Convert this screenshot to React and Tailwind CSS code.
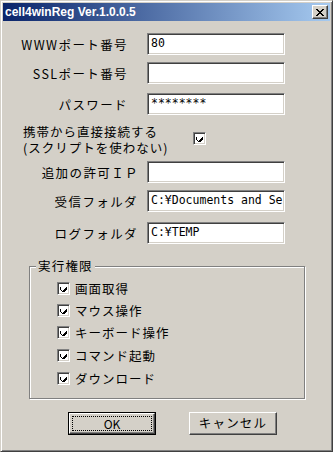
import React from "react";

const jp = { fontFamily: '"Noto Sans CJK JP", "Noto Sans", sans-serif' };
const mono = { fontFamily: '"DejaVu Sans Mono", "Liberation Mono", monospace' };

function Check({ checked = true }) {
  return (
    <span className="flex w-[13px] h-[13px] shrink-0 items-center justify-center bg-white border border-t-[#808080] border-l-[#808080] border-b-white border-r-white shadow-[inset_1px_1px_0_#404040,inset_-1px_-1px_0_#d4d0c8]">
      {checked ? (
        <svg width="7" height="7" viewBox="0 0 7 7" shapeRendering="crispEdges">
          <path d="M0 2h1v3h1v1h1v-1h1v-1h1v-1h1v-1h1v3h-1v1h-1v1h-1v1h-1v-1h-1v-1h-1v-1h-1z" fill="#000" />
        </svg>
      ) : null}
    </span>
  );
}

function Field({ label, value, pr, mt }) {
  return (
    <div className={`flex items-center ${mt}`}>
      <div className={`w-[144px] text-right text-[12.5px] leading-[15px] tracking-[1.4px] text-black ${pr}`} style={jp}>
        {label}
      </div>
      <div
        className="w-[138px] h-[22px] flex items-center pl-[3px] bg-white border border-t-[#808080] border-l-[#808080] border-b-white border-r-white shadow-[inset_1px_1px_0_#404040,inset_-1px_-1px_0_#d4d0c8] overflow-hidden whitespace-nowrap text-[11.5px] text-black"
        style={mono}
      >
        {value}
      </div>
    </div>
  );
}

const perms = [
  { label: "画面取得", mt: "mt-0" },
  { label: "マウス操作", mt: "mt-[9px]" },
  { label: "キーボード操作", mt: "mt-[9px]" },
  { label: "コマンド起動", mt: "mt-[10px]" },
  { label: "ダウンロード", mt: "mt-[10px]" },
];

export default function App() {
  return (
    <div className="w-[333px] h-[452px] bg-[#d4d0c8] border border-t-[#d4d0c8] border-l-[#d4d0c8] border-r-[#404040] border-b-[#404040] shadow-[inset_1px_1px_0_#fff,inset_-1px_-1px_0_#808080] p-[2px] select-none">
      <div className="h-[18px] flex items-center justify-between pl-[2px] pr-[2px] bg-[linear-gradient(90deg,#0a246a,#a6caf0)]">
        <span className="text-white font-bold text-[12px] leading-none" style={{ fontFamily: '"Liberation Sans", Arial, sans-serif' }}>
          cell4winReg Ver.1.0.0.5
        </span>
        <span className="w-[16px] h-[14px] flex items-center justify-center bg-[#d4d0c8] border border-t-white border-l-white border-r-[#404040] border-b-[#404040] shadow-[inset_-1px_-1px_0_#808080]">
          <svg width="8" height="7" viewBox="0 0 8 7" shapeRendering="crispEdges">
            <path d="M0 0h2v1h1v1h2v-1h1v-1h2v1h-1v1h-1v1h-1v1h1v1h1v1h1v1h-2v-1h-1v-1h-2v1h-1v1h-2v-1h1v-1h1v-1h1v-1h-1v-1h-1z" fill="#000" />
          </svg>
        </span>
      </div>

      <Field label="WWWポート番号" value="80" pr="pr-[19px]" mt="mt-[12px]" />
      <Field label="SSLポート番号" value="" pr="pr-[19px]" mt="mt-[7px]" />
      <Field label="パスワード" value="********" pr="pr-[19px]" mt="mt-[9px]" />

      <div className="flex items-start mt-[9px] pl-[20px]">
        <p className="w-[170px] text-[12.5px] leading-[16px] tracking-[1px] text-black" style={jp}>
          携帯から直接接続する
          <br />
          (スクリプトを使わない)
        </p>
        <div className="flex mt-[8px]">
          <Check />
        </div>
      </div>

      <Field label="追加の許可ＩＰ" value="" pr="pr-[8px]" mt="mt-[5px]" />
      <Field label="受信フォルダ" value="C:¥Documents and Se" pr="pr-[9px]" mt="mt-[7px]" />
      <Field label="ログフォルダ" value="C:¥TEMP" pr="pr-[9px]" mt="mt-[10px]" />

      <div className="relative ml-[26px] mt-[22px] w-[276px] h-[133px] border border-[#808080] shadow-[inset_1px_1px_0_#fff,1px_1px_0_#fff] pl-[27px] pt-[15px]">
        <span className="absolute -top-[9px] left-[6px] px-[2px] bg-[#d4d0c8] text-[12.5px] leading-[15px] tracking-[1.2px] text-black" style={jp}>
          実行権限
        </span>
        {perms.map((p) => (
          <div key={p.label} className={`flex items-center gap-[5px] h-[13px] ${p.mt}`}>
            <Check />
            <span className="text-[12.5px] leading-[15px] tracking-[1px] text-black whitespace-nowrap" style={jp}>
              {p.label}
            </span>
          </div>
        ))}
      </div>

      <div className="flex ml-[65px] mt-[13px] gap-[33px]">
        <button className="w-[88px] h-[23px] border border-black p-0 bg-[#d4d0c8]">
          <span className="flex w-full h-full items-center justify-center border border-t-white border-l-white border-r-[#404040] border-b-[#404040] shadow-[inset_-1px_-1px_0_#808080]">
            <span className="flex w-[80px] h-[15px] items-center justify-center border border-dotted border-black text-[12px] leading-none text-black" style={jp}>
              OK
            </span>
          </span>
        </button>
        <button className="w-[88px] h-[23px] flex items-center justify-center bg-[#d4d0c8] border border-t-white border-l-white border-r-[#404040] border-b-[#404040] shadow-[inset_-1px_-1px_0_#808080] text-[12.5px] leading-none tracking-[1.2px] text-black" style={jp}>
          キャンセル
        </button>
      </div>
    </div>
  );
}
